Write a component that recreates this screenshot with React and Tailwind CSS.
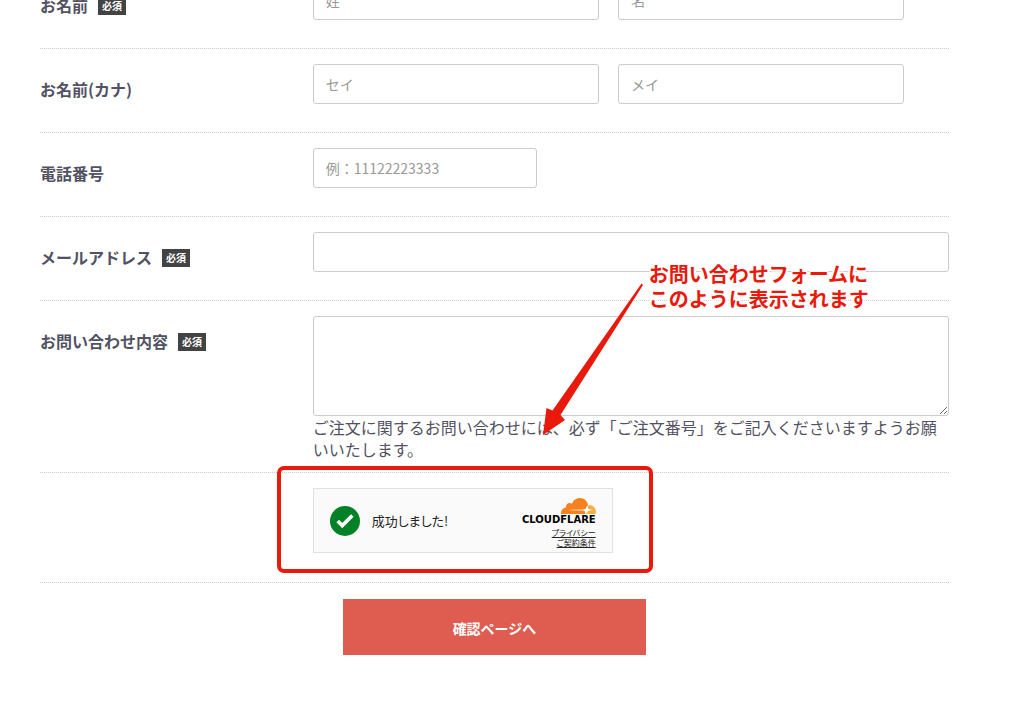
import { Check } from "lucide-react";

function RequiredBadge() {
  return (
    <span className="ml-2.5 h-[18px] bg-[#434343] px-1 text-[10px] leading-[18px] font-bold text-white">
      必須
    </span>
  );
}

function FormRow({ label, htmlFor, required, className = "pb-7", children }) {
  return (
    <div className="flex border-b border-dotted border-[#ccc]">
      <div className="w-[30%] shrink-0 pt-[30px]">
        {label && (
          <label htmlFor={htmlFor} className="flex items-end text-base leading-5 font-bold">
            {label}
            {required && <RequiredBadge />}
          </label>
        )}
      </div>
      <div className={`relative w-[70%] pt-[15px] ${className}`}>{children}</div>
    </div>
  );
}

function TextInput({ className = "w-full", ...props }) {
  return (
    <input
      type="text"
      className={`block h-10 rounded-[3px] border border-[#ccc] bg-white px-3 text-sm placeholder:text-[#999] ${className}`}
      {...props}
    />
  );
}

function CloudflareLogo() {
  return (
    <svg viewBox="0 6.5 24 11" className="h-4 w-[35px]" aria-hidden="true">
      <path
        fill="#f6821f"
        d="M16.5088 16.8447c.1475-.5068.0908-.9707-.1553-1.3154-.2246-.3164-.6045-.499-1.0615-.5205l-8.6592-.1123a.1559.1559 0 0 1-.1333-.0713c-.0283-.042-.0351-.0986-.021-.1553.0278-.084.1123-.1484.2036-.1562l8.7359-.1123c1.0351-.0489 2.1601-.8868 2.5537-1.9136l.499-1.3013c.0215-.0561.0293-.1128.0147-.168-.5625-2.5463-2.835-4.4453-5.5499-4.4453-2.5039 0-4.6284 1.6177-5.3876 3.8614-.4927-.3658-1.1187-.5625-1.794-.499-1.2026.119-2.1665 1.083-2.2861 2.2856-.0283.31-.0069.6128.0635.894C1.5683 13.171 0 14.7754 0 16.752c0 .1748.0142.3515.0352.5273.0141.083.0844.1475.1689.1475h15.9814c.0909 0 .1758-.0645.2032-.1553z"
      />
      <path
        fill="#fbad41"
        d="M19.2656 11.2813c-.0771 0-.1611 0-.2383.0112-.0566 0-.1054.0415-.127.0976l-.3378 1.1744c-.1475.5068-.0918.9707.1543 1.3164.2256.3164.6055.498 1.0625.5195l1.8437.1133c.0557 0 .1055.0263.1329.0703.0283.043.0351.1074.0214.1562-.0283.084-.1132.1485-.204.1553l-1.921.1123c-1.041.0488-2.1582.8867-2.5527 1.914l-.1406.3585c-.0283.0713.0215.1416.0986.1416h6.5977c.0771 0 .1474-.0489.169-.126.1122-.4082.1757-.837.1757-1.2803 0-2.6025-2.125-4.727-4.7344-4.727"
      />
      <path
        fill="#fff"
        d="M17.8 12l.7 1.9 2 .8-2 .8-.7 1.9-.7-1.9-2-.8 2-.8z"
      />
    </svg>
  );
}

function Turnstile() {
  return (
    <div className="flex h-[65px] w-[300px] items-center border border-[#e0e0e0] bg-[#fafafa] px-4 text-[#232323]">
      <span className="flex size-[30px] items-center justify-center rounded-full bg-[#038127] text-white">
        <Check size={22} strokeWidth={4} strokeLinecap="butt" strokeLinejoin="miter" />
      </span>
      <span className="ml-3 text-[13px] [font-feature-settings:'palt']">成功しました!</span>
      <div className="mt-1 ml-auto flex flex-col items-end">
        <CloudflareLogo />
        <span className="font-['DejaVu_Sans',sans-serif] text-[10px] leading-3 font-bold text-black">
          CLOUDFLARE
        </span>
        <a href="#privacy" className="mt-0.5 text-[8px] leading-[10px] underline [font-feature-settings:'palt']">
          プライバシー
        </a>
        <a href="#terms" className="text-[8px] leading-[10px] underline [font-feature-settings:'palt']">
          ご契約条件
        </a>
      </div>
    </div>
  );
}

// Callout pointing at the Turnstile widget
function Callout() {
  return (
    <div className="pointer-events-none absolute -top-10 left-[230px] z-10 flex">
      <svg viewBox="0 0 100 152" className="mt-[22px] h-[152px] w-[100px] shrink-0" aria-hidden="true">
        <path fill="#e9190c" d="M98.500 0.500L100 2 17.500 132 22 137 0 152 3.500 125 9.500 127.500z" />
      </svg>
      <p className="ml-1.5 text-xl leading-[25px] font-bold whitespace-nowrap text-[#e9190c] [text-shadow:0_0_2px_#fff,1px_1px_0_#fff,-1px_-1px_0_#fff,1px_-1px_0_#fff,-1px_1px_0_#fff,2px_0_0_#fff,-2px_0_0_#fff,0_2px_0_#fff,0_-2px_0_#fff]">
        お問い合わせフォームに
        <br />
        このように表示されます
      </p>
    </div>
  );
}

export default function App() {
  return (
    <main className="overflow-hidden bg-white pr-[81px] pb-[50px] pl-10 font-['Noto_Sans_CJK_JP',sans-serif] text-[#525263]">
      <form className="-mt-[35px]" onSubmit={(e) => e.preventDefault()}>
        <FormRow label="お名前" htmlFor="name01" required>
          <div className="flex gap-[3%]">
            <TextInput id="name01" placeholder="姓" className="w-[45%]" />
            <TextInput id="name02" placeholder="名" aria-label="名" className="w-[45%]" />
          </div>
        </FormRow>

        <FormRow label="お名前(カナ)" htmlFor="kana01">
          <div className="flex gap-[3%]">
            <TextInput id="kana01" placeholder="セイ" className="w-[45%]" />
            <TextInput id="kana02" placeholder="メイ" aria-label="メイ" className="w-[45%]" />
          </div>
        </FormRow>

        <FormRow label="電話番号" htmlFor="phone">
          <TextInput id="phone" type="tel" placeholder="例：11122223333" className="w-56" />
        </FormRow>

        <FormRow label="メールアドレス" htmlFor="email" required>
          <TextInput id="email" type="email" />
        </FormRow>

        <FormRow label="お問い合わせ内容" htmlFor="contents" required className="pb-3">
          <textarea
            id="contents"
            className="block h-[100px] w-full resize rounded-[3px] border border-[#ccc] bg-white px-3 py-2 text-sm"
          />
          <p className="text-base leading-[22px]">
            ご注文に関するお問い合わせには、必ず「ご注文番号」をご記入くださいますようお願いいたします。
          </p>
          <Callout />
        </FormRow>

        <FormRow className="pb-[29px]">
          <Turnstile />
          <div className="pointer-events-none absolute -top-[7px] -left-9 h-[107px] w-[376px] rounded-[7px] border-4 border-[#e9190c]" />
        </FormRow>

        <button
          type="submit"
          className="mx-auto mt-4 block h-14 w-1/3 cursor-pointer bg-[#de5d50] pt-0.5 text-sm font-bold text-white"
        >
          確認ページへ
        </button>
      </form>
    </main>
  );
}
